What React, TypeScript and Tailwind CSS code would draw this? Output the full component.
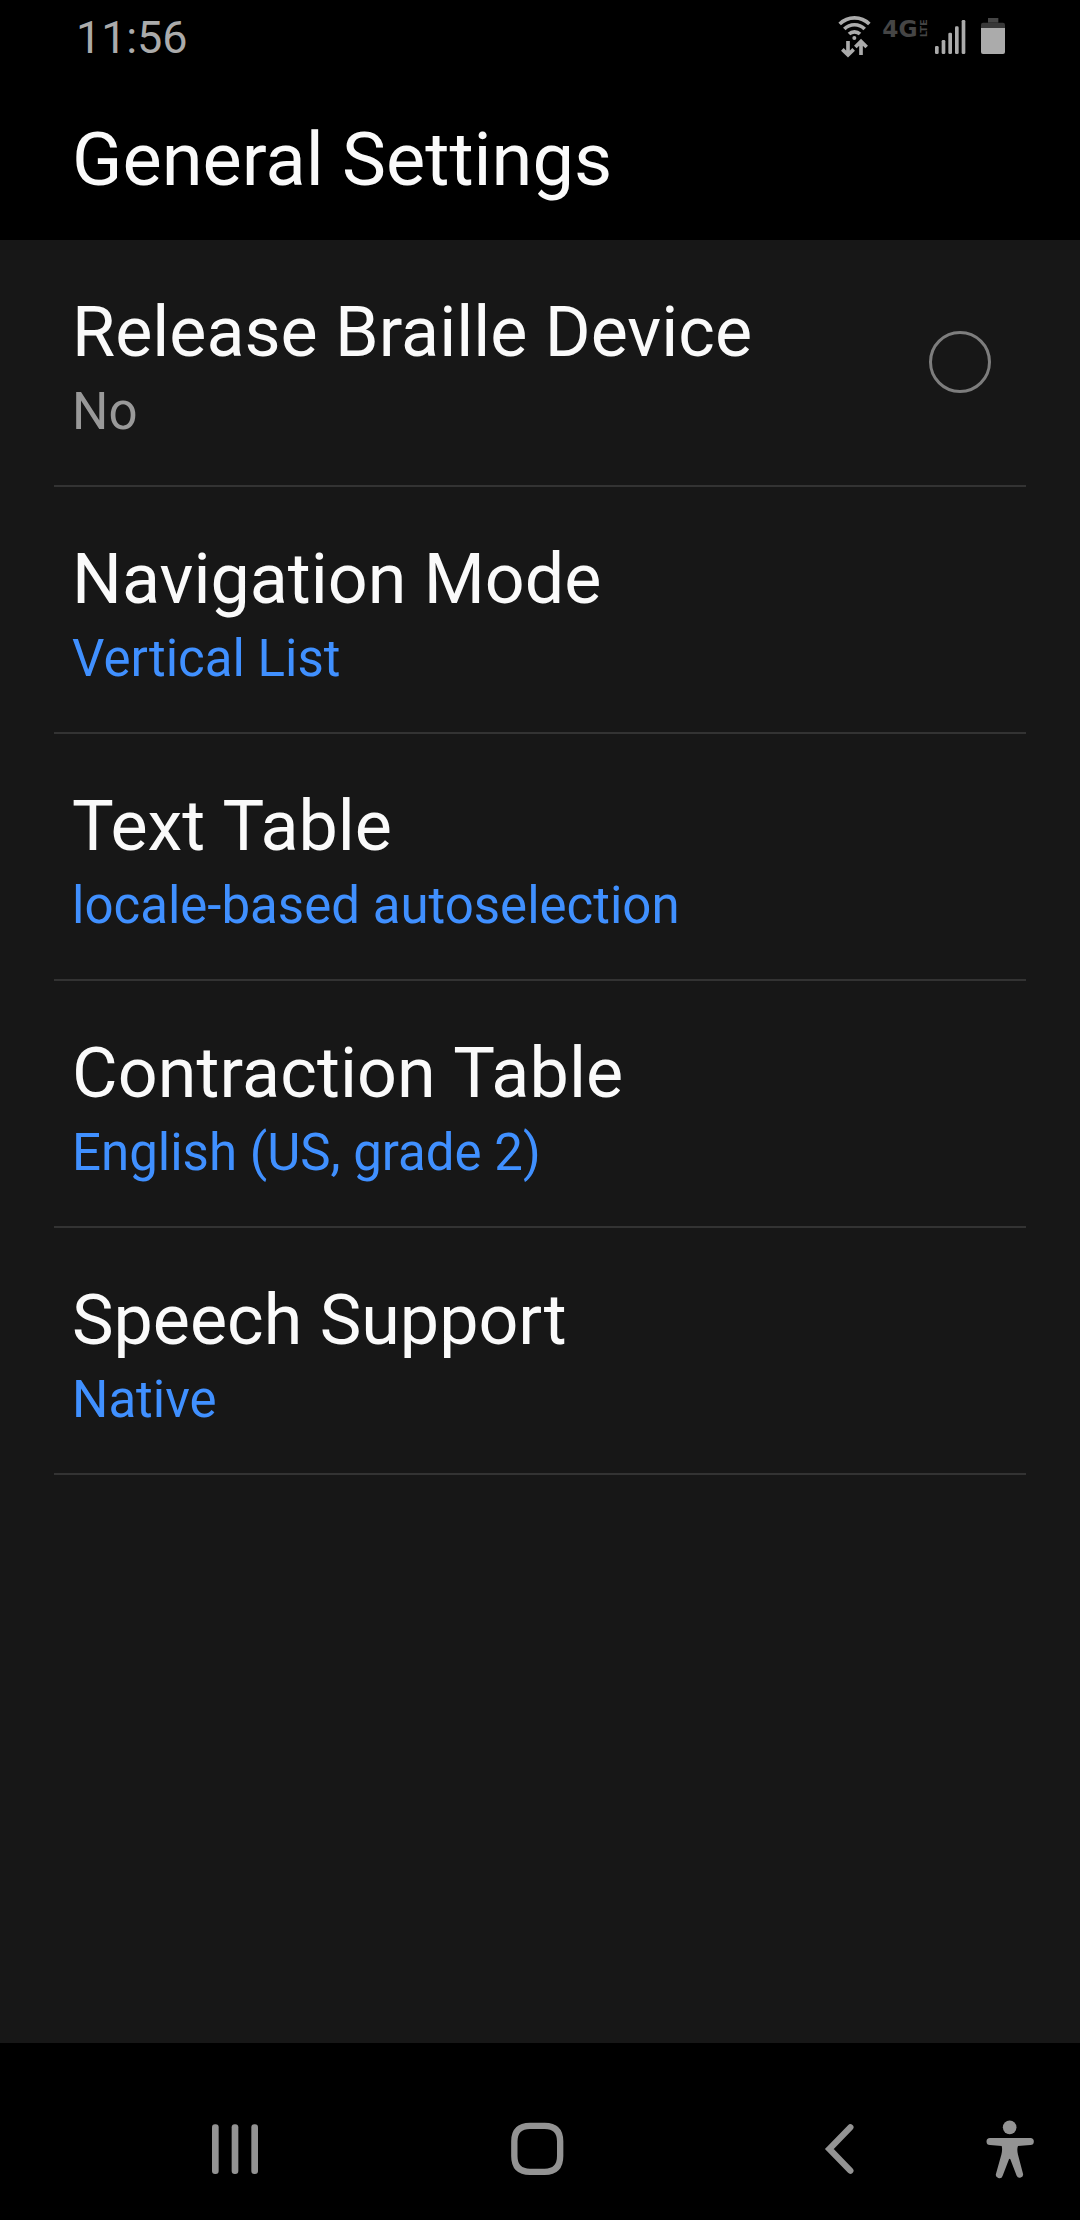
const settings = [
  { title: 'Release Braille Device', summary: 'No', toggle: true },
  { title: 'Navigation Mode', summary: 'Vertical List' },
  { title: 'Text Table', summary: 'locale-based autoselection' },
  { title: 'Contraction Table', summary: 'English (US, grade 2)', tracking: 'tracking-[0.11px]' },
  { title: 'Speech Support', summary: 'Native' },
];

const signalBars = [
  { x: 345, y: 138 },
  { x: 365, y: 120 },
  { x: 385, y: 98 },
  { x: 405, y: 79 },
  { x: 425, y: 60 },
];

function StatusIcons() {
  return (
    <svg className="h-[76px] w-[200px]" viewBox="0 0 600 228" fill="none">
      {/* Wi-Fi with data arrows */}
      <g stroke="#ababab" strokeWidth="11">
        <path d="M59 72 A63 63 0 0 1 148 72" />
        <path d="M73 87 A43 43 0 0 1 134 87" />
        <path d="M87 102 A24 24 0 0 1 120 102" />
        <path d="M84 123 V163 M67 148 L84 165 L101 148" />
        <path d="M123 165 V125 M106 141 L123 124 L140 141" />
      </g>
      <circle cx="103" cy="114" r="6" fill="#ababab" />
      {/* Network type */}
      <g fill="#454545" fontFamily="DejaVu Sans, sans-serif" fontWeight="700">
        <text x="187" y="110" fontSize="71" textLength="106" lengthAdjust="spacingAndGlyphs">4G</text>
        <text transform="translate(320 112) rotate(-90)" fontSize="28" textLength="54" lengthAdjust="spacingAndGlyphs">LTE</text>
      </g>
      {/* Signal strength */}
      {signalBars.map((b) => (
        <rect key={b.x} x={b.x} y={b.y} width="11" height={162 - b.y} rx="4" fill="#ababab" />
      ))}
      {/* Battery */}
      <path d="M504 54 H535 V68 H504 Z" fill="#454545" />
      <path d="M483 84 V74 Q483 68 489 68 H549 Q555 68 555 74 V84 Z" fill="#383838" />
      <path d="M483 84 H555 V156 Q555 162 549 162 H489 Q483 162 483 156 Z" fill="#ababab" />
    </svg>
  );
}

/** Shapes each word on its own so that no kerning is applied across spaces. */
function Words({ text }: { text: string }) {
  return (
    <>
      {text.split(' ').map((word, i) => (
        <span key={i}>
          {i > 0 && <span className="inline-block whitespace-pre"> </span>}
          <span className="inline-block">{word}</span>
        </span>
      ))}
    </>
  );
}

export default function App() {
  return (
    <div className="flex h-[2220px] w-[1080px] flex-col bg-black font-[Roboto,sans-serif] text-[#fafafa]">
      <div className="flex h-[76px] items-start justify-between pr-[60px] pl-[76px]">
        <div className="mt-px text-[45px] leading-[74px] tracking-[-0.15px] text-[#ababab]">11:56</div>
        <StatusIcons />
      </div>
      <header className="h-[164px] pt-[42px] pl-[72px] text-[74px] leading-[84px]">
        <Words text="General Settings" />
      </header>
      <main className="flex-1 bg-[#171717] px-[54px]">
        {settings.map((s) => (
          <div
            key={s.title}
            className="flex h-[247px] items-start justify-between border-b-2 border-[#333333] pr-[35px] pl-[18px]"
          >
            <div className="pt-[51px] whitespace-nowrap">
              <div className={`text-[70px] leading-[82px] ${s.tracking ?? ''}`}>
                <Words text={s.title} />
              </div>
              <div className={`text-[51px] leading-[78px] ${s.toggle ? 'text-[#999999]' : 'text-[#4090ff]'}`}>
                <Words text={s.summary} />
              </div>
            </div>
            {s.toggle && <div className="mt-[91px] size-[62px] rounded-full border-3 border-[#7d7d7d]" />}
          </div>
        ))}
      </main>
      <nav className="flex h-[177px] items-start pt-[75px] pl-[210px]">
        <svg className="h-[60px] w-[50px]" viewBox="90 264 150 180" fill="#939393">
          <rect x="96" y="283" width="20" height="149" rx="9" />
          <rect x="155" y="283" width="20" height="149" rx="9" />
          <rect x="214" y="283" width="20" height="149" rx="9" />
        </svg>
        <svg className="ml-[248px] h-[60px] w-[60px]" viewBox="984 264 180 180" fill="none" stroke="#939393" strokeWidth="19">
          <path d="M1050 287.500 H1094 Q1140.500 287.500 1140.500 334 V378 Q1140.500 425.500 1094 425.500 H1050 Q1003 425.500 1003 378 V334 Q1003 287.500 1050 287.500 Z" />
        </svg>
        <svg
          className="ml-[252px] h-[60px] w-[36px]"
          viewBox="120 114 108 180"
          fill="none"
          stroke="#939393"
          strokeWidth="19"
          strokeLinecap="round"
        >
          <path d="M211 142 L148 207 L211 272" />
        </svg>
        <svg className="ml-[128px] h-[60px] w-[52px] overflow-visible" viewBox="612 114 156 180" fill="#939393">
          <circle cx="689" cy="142" r="20.500" />
          <path d="M630 174 H751 A10.500 10.500 0 0 1 751 195 L714 198 Q710 208 714 224 L729 281 A10 10 0 0 1 710 287 L691 238 Q689 235 687 238 L668 287 A10 10 0 0 1 648 281 L664 224 Q668 208 665 198 L630 195 A10.500 10.500 0 0 1 630 174 Z" />
        </svg>
      </nav>
    </div>
  );
}
